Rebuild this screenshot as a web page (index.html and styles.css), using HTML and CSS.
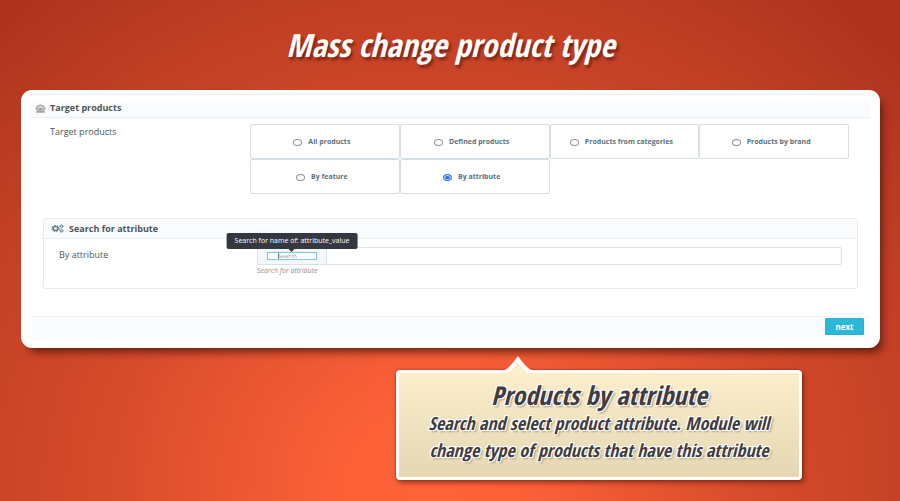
FILE: index.html
```html
<!DOCTYPE html>
<html lang="en">
<head>
<meta charset="utf-8">
<meta name="viewport" content="width=device-width, initial-scale=1">
<title>Mass change product type</title>
<link rel="stylesheet" href="styles.css">
</head>
<body>
<h1 class="title">Mass change product type</h1>
<main class="panel">
  <form class="form">
    <header class="bar">
      <svg class="gear" viewBox="0 0 22 18" aria-hidden="true">
        <ellipse cx="11" cy="9" rx="9" ry="7" fill="#c4c4c4" stroke="#999" stroke-width="2" stroke-dasharray="2 1"/>
        <ellipse cx="11" cy="8" rx="6" ry="4" fill="#e2e2e2" stroke="#999"/>
        <ellipse cx="11" cy="10" rx="4" ry="2" fill="#999"/>
        <path d="M2 16h18" stroke="#888" stroke-width="2"/>
      </svg>
      <h2 class="heading" id="target">Target products</h2>
    </header>
    <div class="row">
      <span class="label">Target products</span>
      <div class="options" role="radiogroup" aria-labelledby="target">
        <label class="option"><input type="radio" name="t">All products</label>
        <label class="option"><input type="radio" name="t">Defined products</label>
        <label class="option"><input type="radio" name="t">Products from categories</label>
        <label class="option"><input type="radio" name="t">Products by brand</label>
        <label class="option"><input type="radio" name="t">By feature</label>
        <label class="option"><input type="radio" name="t" checked>By attribute</label>
      </div>
    </div>
    <section class="card">
      <header class="card-bar">
        <svg class="cogs" viewBox="0 0 26 18" fill="none" stroke="#5c7782" aria-hidden="true">
          <ellipse cx="9" cy="9" rx="5" ry="4" stroke-width="3"/>
          <ellipse cx="9" cy="9" rx="7.500" ry="6" stroke-width="2" stroke-dasharray="3 2.700"/>
          <ellipse cx="21" cy="4.500" rx="2.500" ry="2" stroke-width="2"/>
          <ellipse cx="21" cy="4.500" rx="4" ry="3.300" stroke-dasharray="2 1.500"/>
          <ellipse cx="21" cy="13.500" rx="2.500" ry="2" stroke-width="2"/>
          <ellipse cx="21" cy="13.500" rx="4" ry="3.300" stroke-dasharray="2 1.500"/>
        </svg>
        <h3 class="heading">Search for attribute</h3>
      </header>
      <div class="card-row">
        <label class="label" for="search">By attribute</label>
        <div class="field">
          <div class="tags">
            <div class="addon">
              <input class="search" id="search" type="text" placeholder="Search">
              <span class="caret"></span>
              <span class="tooltip" role="tooltip">Search for name of: attribute_value</span>
            </div>
          </div>
          <p class="hint">Search for attribute</p>
        </div>
      </div>
    </section>
    <footer class="footer"><button class="next" type="button">next</button></footer>
  </form>
</main>
<aside class="callout">
  <svg class="pointer" viewBox="0 0 28 20" aria-hidden="true">
    <path d="M0 15Q4 15 14 1Q24 15 28 15V18H0Z" fill="#fff"/>
    <path d="M4 18Q8 16 14 7Q20 16 24 18V20H4Z" fill="#fceecb"/>
  </svg>
  <h2 class="callout-title">Products by attribute</h2>
  <p class="callout-text">Search and select product attribute. Module will<br>change type of products that have this attribute</p>
</aside>
</body>
</html>
```
FILE: styles.css
```css
* { box-sizing: border-box; }
html { min-height: 100%; background: radial-gradient(ellipse 660px 640px at 48% 98%, #ff6339 0%, #fb6037 15%, #d84c2b 48%, #c03f24 78%, #ac321e 100%); }
body { margin: 0; padding: 0 20px 20px 21px; font-family: "Open Sans", sans-serif; font-size: 7px; line-height: 12px; color: #4f565b; }
h1, h2, h3, p { margin: 0; }
.title { padding-top: 22px; height: 90px; text-align: center; font: italic bold 32px/46px "Open Sans Condensed", "Roboto Condensed", "Liberation Sans", sans-serif; color: #fff; text-shadow: 2px 3px 3px rgba(80, 15, 5, .6); }
.panel { padding: 10px; background: #fff; border-radius: 11px; box-shadow: 5px 7px 8px -3px rgba(70, 15, 5, .75); }
.bar { display: flex; align-items: center; gap: 4px; height: 18px; padding: 0 4px; background: #fafbfd; border-bottom: 1px solid #e9eff2; }
.gear { width: 11px; height: 9px; }
.heading { font-size: 9px; line-height: 12px; font-weight: 700; color: #505456; }
.bar .heading { line-height: 16px; padding-bottom: 2px; }
.row { display: flex; padding: 6px 21px 0 19px; }
.label { flex: 0 0 200px; padding-top: 2px; font-size: 9px; }
.options { flex: 1; display: grid; grid-template-columns: repeat(4, 1fr); }
.option { display: flex; align-items: center; justify-content: center; gap: 6px; height: 35px; padding-right: 6px; border: 1px solid #d5e1e4; border-radius: 2px; font-weight: 700; color: #5b727d; }
input[type="radio"] { appearance: none; width: 9px; height: 7px; margin: 1px 0 0; border: 1px solid #929292; border-radius: 50%; background: #fff; }
input[type="radio"]:checked { border-color: #3b82f6; background: #1769ff; box-shadow: inset 0 0 0 1px #cfe0ff; }
.card { margin: 24px 12px 27px; border: 1px solid #e5e9eb; border-radius: 3px; }
.card-bar { display: flex; align-items: center; gap: 5px; height: 20px; padding: 0 7px; background: #fafbfd; border-bottom: 1px solid #e6eef1; }
.cogs { width: 13px; height: 9px; }
.card-row { display: flex; padding: 8px 15px 11px; }
.card-row .label { flex-basis: 198px; }
.field { flex: 1; }
.tags { display: flex; height: 18px; border: 1px solid #d5e1e4; border-radius: 2px; }
.addon { position: relative; width: 69px; padding: 4px 9px; background: #f5f8f9; border-right: 1px solid #d5e1e4; }
.search { display: block; width: 50px; height: 8px; padding: 0 0 0 10px; border: 1px solid #7accdc; border-radius: 0; background: #fff; font: 6px/6px "Open Sans", sans-serif; outline: 0; }
.search::placeholder { color: #969c9f; opacity: 1; }
.caret { position: absolute; left: 20px; top: 5px; width: 1px; height: 6px; background: #777; }
.tooltip { position: absolute; left: 50%; bottom: 15px; transform: translateX(-50%); padding: 2px 8px; border-radius: 2px; background: #353840; color: #fff; white-space: nowrap; }
.tooltip::after { content: ""; position: absolute; top: 100%; left: 50%; margin-left: -3px; border: 3px solid transparent; border-top-color: #353840; border-bottom: 0; }
.hint { font-style: italic; color: #8b8f91; }
.footer { display: flex; align-items: flex-start; justify-content: flex-end; height: 22px; padding: 1px 6px; background: #fbfcfe; border-top: 1px solid #f1f4f6; }
.next { width: 39px; height: 17px; padding: 0; border: 1px solid #28afce; border-radius: 1px; background: #2eb8d7; color: #fff; font: 700 8px/14px "Open Sans", sans-serif; }
.callout { position: relative; width: 406px; max-width: 100%; margin: 22px 78px 0 auto; padding: 7px 12px 13px; text-align: center; font-family: "Open Sans Condensed", "Roboto Condensed", "Liberation Sans", sans-serif; font-style: italic; font-weight: bold; color: #413c3d; border: 3px solid #fff; border-radius: 4px; background: linear-gradient(#fceecb, #e4d7b2); box-shadow: 0 0 2px #702010, 2px 3px 5px rgba(80, 15, 5, .5); text-shadow: -1px -1px 0 #fff, 1px -1px 0 #fff, -1px 1px 0 #fff, 1px 1px 0 #fff, 2px 2px 2px #a99f84; }
.pointer { position: absolute; left: 105px; top: -18px; width: 28px; height: 20px; }
.callout-title { font-size: 26px; line-height: 30px; }
.callout-text { font-size: 18px; line-height: 27px; }
```
